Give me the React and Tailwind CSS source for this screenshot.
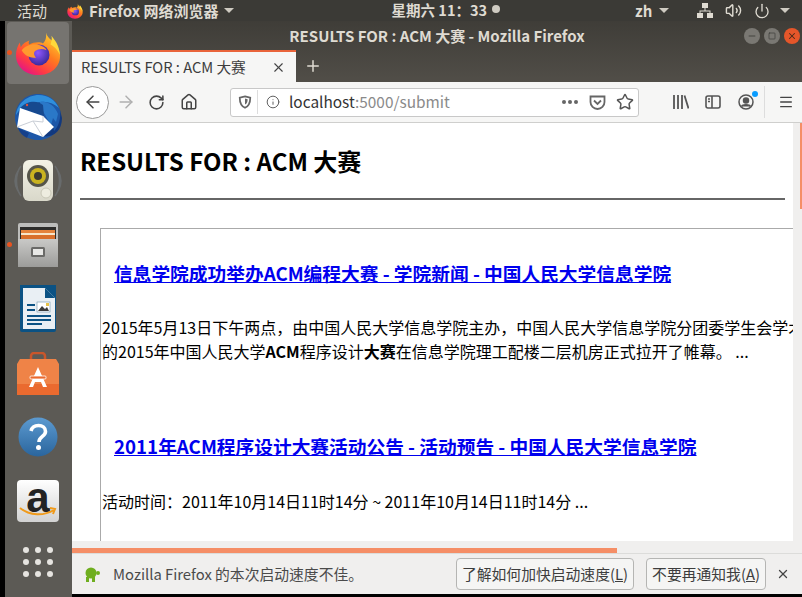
import { X, Plus, ArrowLeft, ArrowRight, RotateCw, Home, Info, Star, Menu, Volume2, Power, Minus, Square } from "lucide-react";

const CJK = "font-['Noto_Sans_CJK_SC','Noto_Sans',sans-serif]";

function FirefoxLogo({ size = 48 }) {
  return (
    <svg width={size} height={size} viewBox="0 0 48 48">
      <defs>
        <linearGradient id="ff1" x1="0.8" y1="0.1" x2="0.2" y2="0.95">
          <stop offset="0" stopColor="#ffcb2e" />
          <stop offset="0.4" stopColor="#ff7a1f" />
          <stop offset="0.75" stopColor="#ff3a45" />
          <stop offset="1" stopColor="#e31587" />
        </linearGradient>
        <radialGradient id="ff2" cx="0.45" cy="0.4" r="0.6">
          <stop offset="0" stopColor="#8f57ff" />
          <stop offset="1" stopColor="#3b2a9b" />
        </radialGradient>
      </defs>
      <path d="M32 1c1 6 4 8 8 11 5 5 7 11 7 15 0 12-10 20-23 20C11 47 1 38 1 26c0-5 2-10 4-13l1 5c2-4 6-6 9-7-1 2-1 3 0 4 4-2 11-3 14-1 4-3 4-9 3-13z" fill="url(#ff1)" />
      <path d="M38 6c3 4 8 9 9 20-3-6-6-9-10-11 1-3 2-6 1-9z" fill="#ffd93b" />
      <circle cx="25" cy="26" r="11" fill="url(#ff2)" />
      <path d="M7 21c4-5 12-8 19-5 3 1 6 3 7 5-5-2-9-1-12 1-2 2-1 5 1 7-6 0-12-2-15-8z" fill="#ff9a2e" />
    </svg>
  );
}

function ThunderbirdLogo() {
  return (
    <svg width="48" height="48" viewBox="0 0 48 48">
      <path d="M24 1c13 0 23 10 23 23S37 47 24 47 1 37 1 24 11 1 24 1z" fill="#1d57a8" />
      <path d="M46 17c1 8-1 16-6 21l-1-7-3 8-2-5-5 9c9 2 19-4 19-18z" fill="#12397f" />
      <path d="M2 22C3 11 13 2 25 2c9 0 16 5 20 13-6-5-12-7-19-6-5 1-9 3-11 6l-9 1z" fill="#2f8fdc" />
      <path d="M26 9c8-1 15 4 18 12l-2 8-3-4-2 7-3-5-8-14z" fill="#2a78c8" />
      <path d="M6 15c3-3 6-5 10-6 5-1 10 0 13 3l1 11-24-8z" fill="#16498f" />
      <path d="M6 15l23 8 11 11-11 10-26-10z" fill="#fff" />
      <path d="M3 34l16-6 10 16M29 23v6l-10-1" fill="none" stroke="#c9ced6" strokeWidth="1" />
      <circle cx="13" cy="12" r="1.200" fill="#d9503f" />
      <path d="M4 35c2 5 5 8 9 10l2-5z" fill="#16408a" />
    </svg>
  );
}

function SpeakerIcon() {
  return (
    <svg width="48" height="44" viewBox="0 0 48 44">
      <defs>
        <linearGradient id="spk" x1="0" y1="0" x2="0" y2="1">
          <stop offset="0" stopColor="#f3f2e6" />
          <stop offset="1" stopColor="#d9d8ca" />
        </linearGradient>
      </defs>
      <path d="M7 7C1 15 1 29 7 37M41 7c6 8 6 22 0 30M4 12C0 18 0 26 4 32M44 12c4 6 4 14 0 20" fill="none" stroke="#77818a" strokeWidth="1.500" opacity="0.45" />
      <rect x="9" y="1" width="30" height="41" rx="6" fill="url(#spk)" />
      <circle cx="24" cy="17" r="11" fill="#55554a" />
      <circle cx="24" cy="17" r="8" fill="#c9b320" />
      <circle cx="24" cy="17" r="4" fill="#3a3a30" />
      <circle cx="32" cy="34" r="5" fill="#eeede0" stroke="#c9c8b8" />
    </svg>
  );
}

function FilesIcon() {
  return (
    <svg width="42" height="45" viewBox="0 0 42 45">
      <defs>
        <linearGradient id="fl" x1="0" y1="0" x2="0" y2="1">
          <stop offset="0" stopColor="#c9c9c7" />
          <stop offset="1" stopColor="#9c9c9a" />
        </linearGradient>
      </defs>
      <rect x="1" y="0" width="40" height="44" rx="2" fill="#bdbdbb" />
      <rect x="3" y="4" width="36" height="13" fill="#2d2c2a" />
      <rect x="4" y="7" width="34" height="3" fill="#e5833c" />
      <rect x="4" y="10" width="34" height="2" fill="#f7e5c8" />
      <rect x="4" y="12" width="34" height="5" fill="#d9702c" />
      <rect x="1" y="16" width="40" height="28" fill="url(#fl)" />
      <rect x="14" y="24" width="14" height="10" rx="1.500" fill="#6a6a68" />
      <rect x="16" y="26" width="10" height="6" fill="#e8e8e6" />
    </svg>
  );
}

function WriterIcon() {
  return (
    <svg width="40" height="48" viewBox="0 0 40 48">
      <path d="M2 0h36v45a2 2 0 0 1-2 2H4a2 2 0 0 1-2-2z" fill="#0b5284" />
      <path d="M5 3h22l10 10v31H5z" fill="#e9eff4" />
      <path d="M27 3l10 10H27z" fill="#0b5284" />
      <rect x="9" y="19" width="8" height="2" fill="#0b5284" />
      <rect x="9" y="24" width="8" height="2" fill="#0b5284" />
      <rect x="19" y="17" width="13" height="10" fill="#fff" stroke="#6d92ab" strokeWidth="0.6" />
      <path d="M20 26l4-5 3 3 2-2 2 4z" fill="#3a3a3a" />
      <rect x="28" y="18" width="3" height="3" fill="#e6c24a" />
      <rect x="9" y="30" width="24" height="2" fill="#0b5284" />
      <rect x="9" y="34" width="24" height="2" fill="#0b5284" />
      <rect x="9" y="38" width="15" height="2" fill="#0b5284" />
    </svg>
  );
}

function BagIcon() {
  return (
    <svg width="42" height="43" viewBox="0 0 42 43">
      <path d="M14 8V4a3 3 0 0 1 3-3h8a3 3 0 0 1 3 3v4" fill="none" stroke="#c9562b" strokeWidth="2.500" />
      <path d="M3 7h36l3 5v31H0V12z" fill="#ef8347" />
      <rect y="32" width="42" height="11" fill="#ea6a2f" />
      <path d="M21 15l-9 20h4l2-5h6l2 5h4z" fill="#fff" />
      <rect x="13" y="24" width="16" height="3" rx="1" fill="#ea6a2f" stroke="#fff" strokeWidth="0.800" />
    </svg>
  );
}

function HelpIcon() {
  return (
    <svg width="40" height="40" viewBox="0 0 40 40">
      <defs>
        <linearGradient id="hp" x1="0" y1="0" x2="0" y2="1">
          <stop offset="0" stopColor="#5c9ad0" />
          <stop offset="1" stopColor="#2a659d" />
        </linearGradient>
      </defs>
      <circle cx="20" cy="20" r="19.500" fill="url(#hp)" />
      <path d="M13 14c1-4 4-5.500 7.500-5.500 4 0 7 2.500 7 6 0 5-6.500 5-6.500 10.500" fill="none" stroke="#fff" strokeWidth="3.600" />
      <circle cx="20.500" cy="30.500" r="2.500" fill="#fff" />
    </svg>
  );
}

function DockItem({ children, active, dot, short }) {
  return (
    <div className={`relative flex items-center justify-center w-[66px] ${short ? "h-[58px]" : "h-[64px]"}`}>
      {active && <div className="absolute left-[2px] top-[1px] w-[62px] h-[62px] rounded bg-[#767470]" />}
      {dot && <div className="absolute left-[2px] top-[29px] w-[5px] h-[5px] rounded-full bg-[#e95420]" />}
      <div className="relative flex items-center justify-center">{children}</div>
    </div>
  );
}

function Dock() {
  return (
    <div className="flex w-[72px] shrink-0 bg-black pl-[5px]">
      <div className="flex flex-col w-[67px] bg-[#5c5a55]">
        <DockItem active dot><FirefoxLogo size={46} /></DockItem>
        <DockItem><ThunderbirdLogo /></DockItem>
        <DockItem><SpeakerIcon /></DockItem>
        <DockItem dot><FilesIcon /></DockItem>
        <DockItem><WriterIcon /></DockItem>
        <DockItem><BagIcon /></DockItem>
        <DockItem><HelpIcon /></DockItem>
        <DockItem>
          <div className="flex items-center justify-center w-[42px] h-[42px] rounded-sm bg-gradient-to-b from-white to-[#d2d2d2] overflow-hidden">
            <span className="font-['Liberation_Sans',sans-serif] font-bold text-[42px] leading-none text-[#222] -mt-[6px]">a</span>
            <svg className="absolute left-[2px] top-[26px]" width="38" height="12" viewBox="0 0 38 12">
              <path d="M1 2c10 8 24 8 34 2M31 2l5 1-2 5" fill="none" stroke="#f09a1a" strokeWidth="2" />
            </svg>
          </div>
        </DockItem>
        <DockItem short>
          <div className="grid grid-cols-3 gap-x-[6px] gap-y-[6px]">
            {[0, 1, 2, 3, 4, 5, 6, 7, 8].map((i) => (
              <div key={i} className="w-[6px] h-[6px] rounded-full bg-[#e6e4e0]" />
            ))}
          </div>
        </DockItem>
      </div>
    </div>
  );
}

function Caret() {
  return <div className="w-0 h-0 border-x-[5px] border-x-transparent border-t-[5px] border-t-[#cfcbc2]" />;
}

function TopBar() {
  return (
    <div className={`flex items-center h-[21px] shrink-0 bg-[#3b3a36] text-[#dfdbd2] text-[15px] leading-none whitespace-nowrap ${CJK}`}>
      <span className="ml-[17px]">活动</span>
      <div className="ml-[20px]"><FirefoxLogo size={16} /></div>
      <span className="ml-[6px] font-bold">Firefox 网络浏览器</span>
      <div className="ml-[5px]"><Caret /></div>
      <span className="ml-[158px] text-[14.5px] font-bold">星期六 11：33</span>
      <div className="ml-[5px] w-[8px] h-[8px] rounded-full bg-[#cfcbc2] -mt-[3px]" />
      <span className="ml-[135px] font-bold">zh</span>
      <div className="ml-[7px]"><Caret /></div>
      <svg className="ml-[28px]" width="16" height="15" viewBox="0 0 16 15" fill="#dfdbd2">
        <rect x="5" y="0" width="6" height="5" />
        <rect x="0" y="10" width="6" height="5" />
        <rect x="10" y="10" width="6" height="5" />
        <path d="M7.500 5h1v2.500H13.500V10h-1V8.500h-9V10h-1V7.500h5z" />
      </svg>
      <Volume2 className="ml-[12px]" size={17} strokeWidth={2} />
      <Power className="ml-[12px]" size={16} strokeWidth={2} />
      <div className="ml-[10px]"><Caret /></div>
    </div>
  );
}

function WindowButton({ color, children }) {
  return <div className={`flex items-center justify-center w-[16px] h-[16px] rounded-full ${color}`}>{children}</div>;
}

function TitleBar() {
  return (
    <div className="grid grid-cols-[1fr_auto_1fr] items-center h-[29px] shrink-0">
      <div />
      <span className={`text-[15px] font-bold text-[#dfdbd2] leading-none whitespace-nowrap ${CJK}`}>
        RESULTS FOR : ACM 大赛 - Mozilla Firefox
      </span>
      <div className="flex justify-end items-center gap-[4px] pr-[2px]">
        <WindowButton color="bg-[#7a7873]"><Minus size={10} strokeWidth={2} className="text-[#3a3a36]" /></WindowButton>
        <WindowButton color="bg-[#7a7873]"><Square size={8} strokeWidth={2} className="text-[#3a3a36]" /></WindowButton>
        <WindowButton color="bg-[#e5562a]"><X size={10} strokeWidth={2.500} className="text-[#4a2a1a]" /></WindowButton>
      </div>
    </div>
  );
}

function TabStrip() {
  return (
    <div className="flex items-stretch h-[32px] shrink-0">
      <div className={`flex items-center w-[224px] pl-[9px] pr-[10px] bg-[#f6f6f5] border-t-2 border-t-[#e9643a] text-[14.67px] text-[#3d3d3d] ${CJK}`}>
        <span className="flex-1 whitespace-nowrap">RESULTS FOR : ACM 大赛</span>
        <X size={15} strokeWidth={1.800} className="text-[#444]" />
      </div>
      <div className="flex items-center pl-[8px]">
        <Plus size={18} strokeWidth={2} className="text-[#dfdbd2]" />
      </div>
    </div>
  );
}

function Toolbar() {
  return (
    <div className={`flex items-center h-[41px] shrink-0 bg-[#f6f6f5] border-b border-[#cfcfcd] text-[#444] ${CJK}`}>
      <div className="flex items-center justify-center w-[33px] h-[33px] ml-[4px] rounded-full border border-[#999] bg-white">
        <ArrowLeft size={20} strokeWidth={1.800} />
      </div>
      <ArrowRight className="ml-[7px] text-[#b0b0b0]" size={20} strokeWidth={1.800} />
      <RotateCw className="ml-[12px]" size={17} strokeWidth={2.200} />
      <Home className="ml-[15px]" size={18} strokeWidth={2} />
      <div className="flex items-center w-[409px] h-[29px] ml-[32px] rounded-[3px] border border-[#c8c8c8] bg-white">
        <svg className="ml-[7px]" width="14" height="14" viewBox="0 0 16 16" fill="none" stroke="#666" strokeWidth="2">
          <path d="M8 1.500l6 1.500c0 6-1.500 9.500-6 11.500C3.500 12.500 2 9 2 3z" />
          <path d="M8 4l3 .8c0 3-.8 5-3 6z" fill="#666" stroke="none" />
        </svg>
        <div className="w-px h-[24px] bg-[#ddd] ml-[5px]" />
        <Info className="ml-[8px] text-[#555]" size={14} strokeWidth={1.600} />
        <span className="ml-[9px] text-[15.4px] leading-none whitespace-nowrap text-[#333]">
          localhost<span className="text-[#8a8a8a]">:5000/submit</span>
        </span>
        <div className="flex items-center gap-[2px] ml-auto">
          <div className="w-[4px] h-[4px] rounded-full bg-[#666]" />
          <div className="w-[4px] h-[4px] rounded-full bg-[#666]" />
          <div className="w-[4px] h-[4px] rounded-full bg-[#666]" />
        </div>
        <svg className="ml-[11px]" width="17" height="15" viewBox="0 0 16 15" fill="none" stroke="#666" strokeWidth="1.800">
          <path d="M1 1.500h14V7a7 7 0 0 1-14 0z" />
          <path d="M4.500 5.500L8 9l3.500-3.500" />
        </svg>
        <Star className="ml-[10px] mr-[4px] text-[#555]" size={18} strokeWidth={2} />
      </div>
      <svg className="ml-[34px]" width="16" height="14" viewBox="0 0 16 14" fill="none" stroke="#555" strokeWidth="1.800">
        <path d="M1 0v14M5 0v14M9 0v14M11.500 0.500l4 13" />
      </svg>
      <svg className="ml-[16px]" width="16" height="14" viewBox="0 0 16 14" fill="none" stroke="#555" strokeWidth="1.600">
        <rect x="1" y="1" width="14" height="12" rx="2" />
        <path d="M7 1v12M3 4h2M3 6.500h2" />
      </svg>
      <div className="relative ml-[17px]">
        <svg width="16" height="16" viewBox="0 0 16 16" fill="none" stroke="#555" strokeWidth="1.500">
          <circle cx="8" cy="8" r="7" />
          <circle cx="8" cy="6.500" r="2.500" fill="#555" />
          <path d="M3.500 12.500c1-2.500 8-2.500 9 0" fill="#555" />
        </svg>
        <div className="absolute -top-[3px] -right-[4px] w-[6px] h-[6px] rounded-full bg-[#0a9dff]" />
      </div>
      <div className="w-px h-[32px] bg-[#ddd] ml-[10px]" />
      <Menu className="ml-[13px]" size={16} strokeWidth={2} />
    </div>
  );
}

function Page() {
  return (
    <div className="flex flex-1 min-h-0">
      <div className={`flex-1 min-w-0 overflow-hidden bg-white text-black pl-[8px] ${CJK}`}>
        <h1 className="mt-[20px] text-[24px] leading-[36px] font-bold">RESULTS FOR : ACM 大赛</h1>
        <div className="mt-[19px] w-[705px] h-[2px] bg-[#666]" />
        <div className="mt-[28px] ml-[20px] w-[900px] h-[400px] pl-px pt-[30px] border border-[#aaa]">
          <a href="#" className="block ml-[12px] text-[18.72px] leading-[28px] font-bold text-[#0000ee] underline whitespace-nowrap">
            信息学院成功举办ACM编程大赛 - 学院新闻 - 中国人民大学信息学院
          </a>
          <p className="mt-[28px] text-[16px] leading-[24px] whitespace-nowrap">
            2015年5月13日下午两点，由中国人民大学信息学院主办，中国人民大学信息学院分团委学生会学术部承办
            <br />
            的2015年中国人民大学<b>ACM</b>程序设计<b>大赛</b>在信息学院理工配楼二层机房正式拉开了帷幕。 ...
          </p>
          <a href="#" className="block mt-[69px] ml-[12px] text-[18.72px] leading-[28px] font-bold text-[#0000ee] underline whitespace-nowrap">
            2011年ACM程序设计大赛活动公告 - 活动预告 - 中国人民大学信息学院
          </a>
          <p className="mt-[29px] text-[16px] leading-[24px] whitespace-nowrap">
            活动时间：2011年10月14日11时14分 ~ 2011年10月14日11时14分 ...
          </p>
        </div>
      </div>
      <div className="flex justify-end w-[9px] shrink-0 bg-[#f0efee]">
        <div className="w-[2px] h-[86px] bg-[#f58e66]" />
      </div>
    </div>
  );
}

function HorizontalScrollbar() {
  return (
    <div className="flex flex-col justify-end h-[12px] shrink-0 bg-[#f0efee]">
      <div className="w-[545px] h-[5px] bg-[#f58e66]" />
    </div>
  );
}

function NotifyButton({ width, children }) {
  return (
    <button className={`h-[32px] rounded-[4px] border border-[#b5b5b3] bg-[#f5f5f4] text-[14.8px] leading-none text-[#3d3d3d] whitespace-nowrap ${width}`}>
      {children}
    </button>
  );
}

function NotificationBar() {
  return (
    <div className={`flex items-center h-[41px] shrink-0 bg-[#f0efee] border-t border-[#dcdcda] text-[14.8px] text-[#4a4a4a] ${CJK}`}>
      <svg className="ml-[12px]" width="16" height="15" viewBox="0 0 16 15" fill="#6fae1f">
        <ellipse cx="7" cy="6" rx="5.500" ry="5.500" />
        <circle cx="14" cy="6" r="2" />
        <rect x="2" y="10" width="3" height="5" />
        <rect x="8" y="10" width="3" height="5" />
      </svg>
      <span className="ml-[13px] flex-1 whitespace-nowrap">Mozilla Firefox 的本次启动速度不佳。</span>
      <NotifyButton width="w-[178px]">了解如何加快启动速度(<u>L</u>)</NotifyButton>
      <div className="w-[12px]" />
      <NotifyButton width="w-[120px]">不要再通知我(<u>A</u>)</NotifyButton>
      <X className="ml-[10px] mr-[12px] text-[#444]" size={14} strokeWidth={2.200} />
    </div>
  );
}

export default function App() {
  return (
    <div className="flex flex-col w-[802px] h-[597px] overflow-hidden">
      <TopBar />
      <div className="flex flex-1 min-h-0">
        <Dock />
        <div className="flex flex-col flex-1 min-w-0 pb-[3px] bg-black">
          <div className="bg-gradient-to-b from-[#3f3d38] to-[#514e48]">
            <TitleBar />
            <TabStrip />
          </div>
          <Toolbar />
          <Page />
          <HorizontalScrollbar />
          <NotificationBar />
        </div>
      </div>
    </div>
  );
}
